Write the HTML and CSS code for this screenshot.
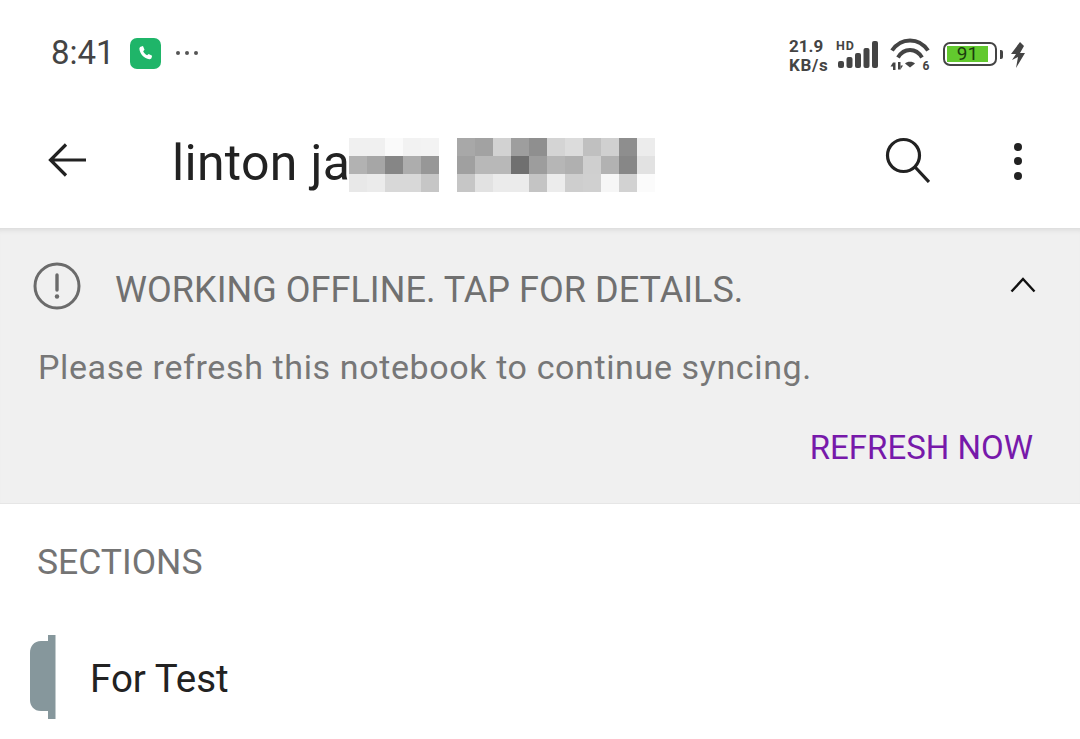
FILE: index.html
```html
<!DOCTYPE html>
<html lang="en">
<head>
<meta charset="utf-8">
<title>Notebook</title>
<link rel="stylesheet" href="styles.css">
</head>
<body>
<div class="app">
  <header class="status">
    <div class="status-left">
      <span class="time">8:41</span>
      <span class="call"><svg width="32" height="32" viewBox="0 0 32 32"><path d="M11 9.500 13.400 8.800 15 12.600 13.600 14.200C14.400 16 15.800 17.500 17.600 18.400L19.300 17 22.800 18.800 22.200 21.200C21.900 22 21 22.600 20 22.400 14.600 21.600 10.200 16.900 9.700 11.800 9.600 10.800 10.100 9.900 11 9.500Z" fill="#fff"/></svg></span>
      <span class="more-dots"><i></i><i></i><i></i></span>
    </div>
    <div class="status-right">
      <span class="speed"><span>21.9</span><span class="speed-unit">KB/s</span></span>
      <span class="signal">
        <span class="hd">HD</span>
        <svg width="42" height="27" viewBox="0 0 42 27"><g fill="#444"><rect x="0" y="20" width="6" height="7" rx="2"/><rect x="8.500" y="16" width="6" height="11" rx="2"/><rect x="17" y="12" width="6" height="15" rx="2"/><rect x="25.500" y="7" width="6" height="20" rx="2"/><rect x="34" y="0" width="6" height="27" rx="2"/></g></svg>
      </span>
      <span class="wifi">
        <svg width="40" height="34" viewBox="0 0 40 34"><g fill="none" stroke="#444" stroke-width="4"><path d="M2 12.500C11 -1 29 -1 38 12.500"/><path d="M8 19.500C14 9.500 26 9.500 32 19.500"/></g><path d="M15 25.500C17 23 23 23 25 25.500L20 29.500Z" fill="#444"/><g fill="#444"><rect x="3" y="24.500" width="2.500" height="7.500"/><path d="M.5 28.500 3 24.500V28.500Z"/><rect x="8" y="24" width="2.500" height="7.500"/><path d="M10.500 27.500H13L10.500 31.500Z"/></g><text x="32.500" y="32" class="wifi-six">6</text></svg>
      </span>
      <span class="battery"><span class="cell"><span class="fill">91</span></span><span class="nub"></span></span>
      <svg class="bolt" width="16" height="26" viewBox="0 0 16 26"><path d="M10 0 1 12H6L2 18 8 15 6 26 15 11H10L14 4Z" fill="#444"/></svg>
    </div>
  </header>

  <nav class="toolbar">
    <svg class="back" width="40" height="36" viewBox="0 0 40 36"><path d="M38 18H3M18 2.500 2.500 18 18 33.500" fill="none" stroke="#222" stroke-width="3.200"/></svg>
    <div class="title">
      <span class="title-text">linton ja</span>
      <svg class="mosaic" width="306" height="54" viewBox="0 0 306 54" shape-rendering="crispEdges">
        <rect x="0" y="0" width="18" height="18" fill="#f0f0f0"/><rect x="18" y="0" width="18" height="18" fill="#f0f0f0"/><rect x="36" y="0" width="18" height="18" fill="#fafafa"/><rect x="54" y="0" width="18" height="18" fill="#f2f2f2"/><rect x="72" y="0" width="18" height="18" fill="#f3f3f3"/>
        <rect x="0" y="18" width="18" height="18" fill="#b2b2b2"/><rect x="18" y="18" width="18" height="18" fill="#a6a6a6"/><rect x="36" y="18" width="18" height="18" fill="#868686"/><rect x="54" y="18" width="18" height="18" fill="#adadad"/><rect x="72" y="18" width="18" height="18" fill="#979797"/>
        <rect x="0" y="36" width="18" height="18" fill="#e8e8e8"/><rect x="18" y="36" width="18" height="18" fill="#ebebeb"/><rect x="36" y="36" width="18" height="18" fill="#d8d8d8"/><rect x="54" y="36" width="18" height="18" fill="#d8d8d8"/><rect x="72" y="36" width="18" height="18" fill="#c6c6c6"/>
        <rect x="108" y="0" width="18" height="18" fill="#a8a8a8"/><rect x="126" y="0" width="18" height="18" fill="#a2a2a2"/><rect x="144" y="0" width="18" height="18" fill="#d2d2d2"/><rect x="162" y="0" width="18" height="18" fill="#9e9e9e"/><rect x="180" y="0" width="18" height="18" fill="#8f8f8f"/><rect x="198" y="0" width="18" height="18" fill="#d4d4d4"/><rect x="216" y="0" width="18" height="18" fill="#dcdcdc"/><rect x="234" y="0" width="18" height="18" fill="#c0c0c0"/><rect x="252" y="0" width="18" height="18" fill="#d0d0d0"/><rect x="270" y="0" width="18" height="18" fill="#8e8e8e"/><rect x="288" y="0" width="18" height="18" fill="#ececec"/>
        <rect x="108" y="18" width="18" height="18" fill="#a0a0a0"/><rect x="126" y="18" width="18" height="18" fill="#b8b8b8"/><rect x="144" y="18" width="18" height="18" fill="#b8b8b8"/><rect x="162" y="18" width="18" height="18" fill="#707070"/><rect x="180" y="18" width="18" height="18" fill="#9d9d9d"/><rect x="198" y="18" width="18" height="18" fill="#b6b6b6"/><rect x="216" y="18" width="18" height="18" fill="#b0b0b0"/><rect x="234" y="18" width="18" height="18" fill="#cfcfcf"/><rect x="252" y="18" width="18" height="18" fill="#b2b2b2"/><rect x="270" y="18" width="18" height="18" fill="#878787"/><rect x="288" y="18" width="18" height="18" fill="#e2e2e2"/>
        <rect x="108" y="36" width="18" height="18" fill="#c6c6c6"/><rect x="126" y="36" width="18" height="18" fill="#e2e2e2"/><rect x="144" y="36" width="18" height="18" fill="#ebebeb"/><rect x="162" y="36" width="18" height="18" fill="#ebebeb"/><rect x="180" y="36" width="18" height="18" fill="#c4c4c4"/><rect x="198" y="36" width="18" height="18" fill="#ececec"/><rect x="216" y="36" width="18" height="18" fill="#cecece"/><rect x="234" y="36" width="18" height="18" fill="#d0d0d0"/><rect x="252" y="36" width="18" height="18" fill="#f6f6f6"/><rect x="270" y="36" width="18" height="18" fill="#d2d2d2"/><rect x="288" y="36" width="18" height="18" fill="#fbfbfb"/>
      </svg>
    </div>
    <svg class="search" width="46" height="46" viewBox="0 0 46 46"><circle cx="19.500" cy="18.500" r="16" fill="none" stroke="#222" stroke-width="3.200"/><path d="M31 30 45 45" stroke="#222" stroke-width="3.200" fill="none"/></svg>
    <span class="kebab"><i></i><i></i><i></i></span>
  </nav>

  <section class="banner">
    <div class="banner-head">
      <svg class="alert" width="48" height="48" viewBox="0 0 48 48"><circle cx="24" cy="24" r="22" fill="none" stroke="#6b6b6b" stroke-width="3"/><path d="M24 13V28" stroke="#6b6b6b" stroke-width="3.400" stroke-linecap="round"/><circle cx="24" cy="34.500" r="2.200" fill="#6b6b6b"/></svg>
      <span class="banner-title">WORKING OFFLINE. TAP FOR DETAILS.</span>
      <svg class="chevron" width="26" height="16" viewBox="0 0 26 16"><path d="M1.500 14.500 13 2 24.500 14.500" fill="none" stroke="#111" stroke-width="2.400"/></svg>
    </div>
    <p class="banner-text">Please refresh this notebook to continue syncing.</p>
    <div class="banner-action"><span class="refresh">REFRESH NOW</span></div>
  </section>

  <main class="content">
    <h2 class="section-label">SECTIONS</h2>
    <div class="section-row">
      <svg class="tab" width="26" height="84" viewBox="0 0 26 84"><path d="M25.500 0V84H18V76H11C4 76 0 71 0 65V18C0 11 4 6 11 6H18V0Z" fill="#86979c"/></svg>
      <span class="section-name">For Test</span>
    </div>
  </main>
</div>
</body>
</html>
```

FILE: styles.css
```css
* { box-sizing: border-box; }
html, body { margin: 0; height: 100%; }
body { background: #fff; font-family: Roboto, "Noto Sans", sans-serif; overflow: hidden; }
.app { width: 1080px; height: 739px; display: flex; flex-direction: column; overflow: hidden; }

.status { height: 108px; flex: none; display: flex; justify-content: space-between; align-items: flex-start; padding: 32px 54px 0 51px; }
.status-left { display: flex; align-items: center; height: 42px; }
.time { font-size: 33px; color: #444; line-height: 42px; width: 79px; }
.call { width: 31px; height: 31px; border-radius: 7px; background: #1fb569; display: flex; align-items: center; justify-content: center; }
.more-dots { display: flex; gap: 5px; margin-left: 15px; }
.more-dots i { width: 4px; height: 4px; border-radius: 50%; background: #555; display: block; }
.status-right { display: flex; align-items: flex-start; margin-top: 5px; }
.speed { display: flex; flex-direction: column; font-size: 17px; line-height: 19px; font-weight: 700; color: #444; width: 40px; white-space: nowrap; }
.speed-unit { letter-spacing: .7px; }
.signal { position: relative; width: 44px; height: 27px; margin: 4px 0 0 7px; padding-left: 2px; }
.hd { position: absolute; top: 0; left: 0; font-size: 12.500px; line-height: 9px; letter-spacing: 1px; font-weight: 700; color: #444; }
.signal svg { display: block; }
.wifi { margin: 1px 0 0 10px; height: 34px; }
.wifi svg { display: block; overflow: visible; }
.wifi-six { font: 700 12px Roboto, sans-serif; fill: #444; }
.battery { display: flex; align-items: center; margin: 5px 0 0 13px; height: 24px; }
.cell { width: 54px; height: 24px; border: 2.500px solid #444; border-radius: 7px; padding: 2px; display: flex; }
.fill { width: 41px; background: #62c92e; color: #1c3b10; font-size: 19px; line-height: 15px; text-align: center; }
.nub { width: 3px; height: 9px; background: #444; border-radius: 0 2px 2px 0; margin-left: 3px; }
.bolt { margin: 5px 0 0 7px; }

.toolbar { height: 120px; flex: none; display: flex; align-items: center; padding: 0 0 16px 48px; position: relative; z-index: 1; }
.back { flex: none; }
.title { width: 712px; margin-left: 84px; display: flex; align-items: center; position: relative; }
.title-text { font-size: 50px; letter-spacing: .3px; color: #222; line-height: 60px; padding-top: 6px; }
.mosaic { position: absolute; left: 177px; top: 11px; }
.search { flex: none; }
.kebab { display: flex; flex-direction: column; gap: 6.500px; margin: 2px 0 0 84px; }
.kebab i { display: block; width: 8px; height: 8px; border-radius: 50%; background: #222; }

.banner { height: 276px; flex: none; background: #f0f0f0; box-shadow: inset 0 6px 5px -4px #d9d9d9; border-bottom: 1px solid #e6e6e6; padding: 0 47px 0 33px; display: flex; flex-direction: column; }
.banner-head { display: flex; align-items: center; height: 48px; margin-top: 34px; }
.alert { flex: none; }
.banner-title { font-size: 36px; letter-spacing: .04px; color: #707070; margin: 8px 0 0 34px; line-height: 40px; white-space: nowrap; flex: 1; }
.chevron { flex: none; margin: -3px -3px 0 0; }
.banner-text { margin: 35px 0 0 5px; font-size: 34px; line-height: 44px; color: #777; white-space: nowrap; letter-spacing: .62px; }
.banner-action { display: flex; justify-content: flex-end; margin-top: 37px; }
.refresh { font-size: 33px; line-height: 44px; color: #7719aa; }

.content { flex: 1; padding: 0 0 0 30px; }
.section-label { margin: 37px 0 0 7px; font-size: 35.500px; line-height: 42px; font-weight: 400; color: #747474; }
.section-row { display: flex; align-items: center; margin-top: 55px; }
.tab { flex: none; display: block; margin-top: -3px; }
.section-name { font-size: 38.500px; line-height: 48px; color: #222; margin-left: 34px; }
```
